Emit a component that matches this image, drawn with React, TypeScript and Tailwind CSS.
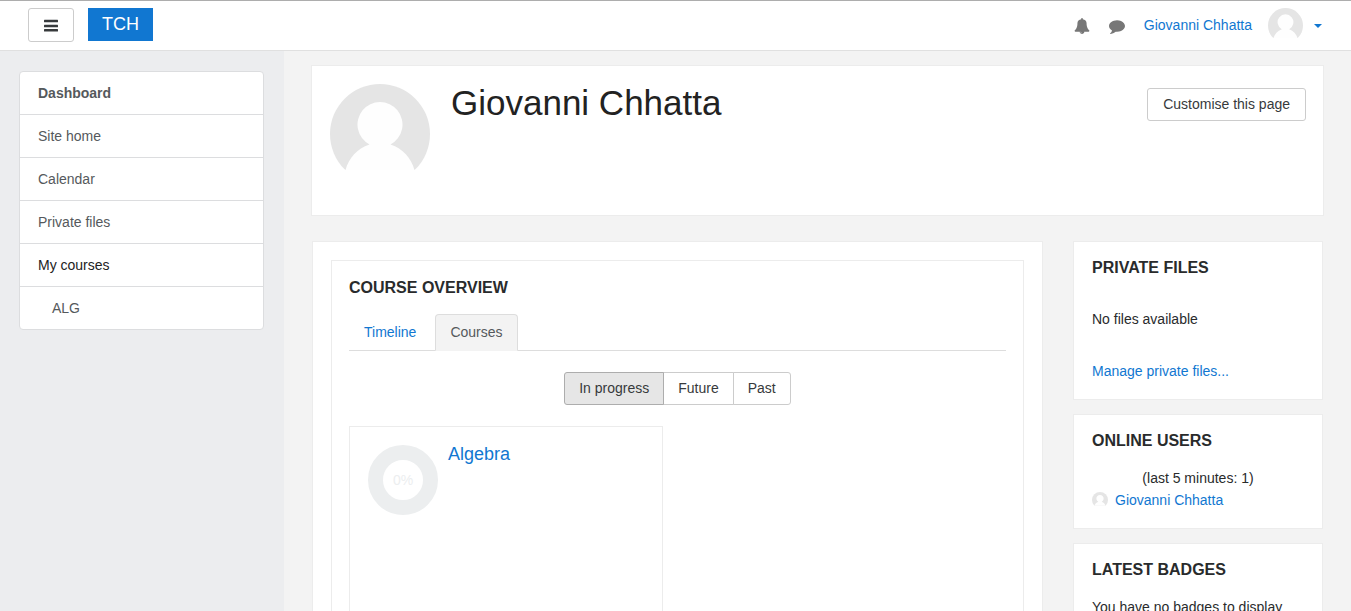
import React from "react";

const navItems = [
  { label: "Dashboard", style: "pl-[18px] font-bold text-[#55595c]" },
  { label: "Site home", style: "pl-[18px] text-[#55595c]" },
  { label: "Calendar", style: "pl-[18px] text-[#55595c]" },
  { label: "Private files", style: "pl-[18px] text-[#55595c]" },
  { label: "My courses", style: "pl-[18px] text-[#222222]" },
  { label: "ALG", style: "pl-8 text-[#55595c]" },
];

function Avatar({ className, id }: { className: string; id: string }) {
  return (
    <svg viewBox="0 0 100 100" className={className} aria-hidden="true">
      <defs>
        <clipPath id={id}>
          <rect width="100" height="86" />
        </clipPath>
      </defs>
      <g clipPath={`url(#${id})`}>
        <circle cx="50" cy="50" r="50" fill="#e5e5e5" />
        <path
          d="M15.500 86C19 74 27 64.500 39.500 60.500A22.500 22.500 0 1 1 60.500 60.500C73 64.500 81 74 84.500 86V90H15.500Z"
          fill="#fefefe"
        />
      </g>
    </svg>
  );
}

function BarsIcon() {
  return (
    <svg viewBox="0 0 14 13" className="h-[13px] w-[14px]" fill="currentColor" aria-hidden="true">
      <rect y="0.700" width="14" height="2.600" rx="0.500" />
      <rect y="5.700" width="14" height="2.600" rx="0.500" />
      <rect y="10" width="14" height="2.600" rx="0.500" />
    </svg>
  );
}

function BellIcon() {
  return (
    <svg viewBox="0 0 1792 1792" className="size-4" fill="currentColor" aria-hidden="true">
      <path d="M912 1696q0-16-16-16-59 0-101.500-42.500t-42.500-101.500q0-16-16-16t-16 16q0 73 51.500 124.500t124.500 51.500q16 0 16-16zm816-288q0 52-38 90t-90 38h-448q0 106-75 181t-181 75-181-75-75-181h-448q-52 0-90-38t-38-90q50-42 91-88t85-119.500 74.500-158.500 50-206 19.500-260q0-152 117-282.500t307-158.500q-8-19-8-39 0-40 28-68t68-28 68 28 28 68q0 20-8 39 190 28 307 158.500t117 282.500q0 139 19.500 260t50 206 74.500 158.500 85 119.500 91 88z" />
    </svg>
  );
}

function CommentIcon() {
  return (
    <svg viewBox="0 0 1792 1792" className="size-4" fill="currentColor" aria-hidden="true">
      <path d="M1792 896q0 174-120 321.500t-326 233-450 85.500q-70 0-145-8-198 175-460 242-49 14-114 22-17 2-30.500-9t-17.500-29v-1q-3-4-.5-12t2-10 4.500-9.500l6-9 7-8.500 8-9q7-8 31-34.500t34.500-38 31-39.500 32.500-51 27-59 26-76q-157-89-247.500-220t-90.500-281q0-130 71-248.500t191-204.500 286-136.500 348-50.500q244 0 450 85.500t326 233 120 321.500z" />
    </svg>
  );
}

function CaretIcon() {
  return (
    <svg viewBox="0 0 8 4" className="h-1 w-2" fill="currentColor" aria-hidden="true">
      <path d="M0 0H8L4 4Z" />
    </svg>
  );
}

function Block({ title, children }: { title: string; children: React.ReactNode }) {
  return (
    <section className="border border-[#ececec] bg-white px-[18px] pt-4 pb-[17px]">
      <h2 className="text-base leading-5 font-bold text-[#292b2c] uppercase">{title}</h2>
      {children}
    </section>
  );
}

export default function App() {
  return (
    <div className="flex min-h-screen flex-col bg-[#f3f3f3] font-['Liberation_Sans',Arial,sans-serif] text-sm leading-[21px] text-[#292b2c]">
      <header className="flex h-[51px] items-start justify-between border-t border-b border-t-[#adadad] border-b-[#e0e0e0] bg-white pt-[7px] pr-[29px] pl-7">
        <div className="flex items-start gap-[14px]">
          <button
            type="button"
            aria-label="Side panel"
            className="flex h-[34px] w-[46px] items-center justify-center rounded-[3px] border border-[#cccccc] bg-white text-[#373a3c]"
          >
            <BarsIcon />
          </button>
          <a href="#" className="bg-[#1177d1] px-[14px] text-lg leading-[33px] text-white">
            TCH
          </a>
        </div>
        <div className="flex items-center gap-[19px]">
          <button type="button" aria-label="Notifications" className="text-[#777777]">
            <BellIcon />
          </button>
          <button type="button" aria-label="Messages" className="text-[#777777]">
            <CommentIcon />
          </button>
          <a href="#" className="flex items-center text-[#1177d1]">
            Giovanni Chhatta
            <Avatar id="avatar-header" className="mr-[11px] ml-4 size-[35px]" />
            <CaretIcon />
          </a>
        </div>
      </header>

      <div className="flex grow">
        <aside className="w-[284px] shrink-0 bg-[#ecedef] py-5 pr-5 pl-[19px]">
          <nav className="divide-y divide-[#dcdddf] overflow-hidden rounded border border-[#dcdddf] bg-white">
            {navItems.map((item) => (
              <a key={item.label} href="#" className={`block h-[43px] pt-[11px] last:h-[42px] ${item.style}`}>
                {item.label}
              </a>
            ))}
          </nav>
        </aside>

        <main className="min-w-0 grow px-[27px] pt-[14px] pb-6">
          <div className="flex min-h-[151px] items-start border border-[#ececec] bg-white py-[18px] pr-[17px] pl-[18px]">
            <Avatar id="avatar-profile" className="size-[100px] shrink-0" />
            <h1 className="ml-[21px] grow text-[35px] leading-[38px] text-[#222222]">Giovanni Chhatta</h1>
            <button
              type="button"
              className="mt-1 h-[33px] rounded-[3px] border border-[#cccccc] bg-white px-[15px] text-[#373a3c]"
            >
              Customise this page
            </button>
          </div>

          <div className="mx-px mt-[25px] flex items-start gap-[30px]">
            <div className="min-w-0 grow border border-[#ececec] bg-white p-[18px]">
              <section className="border border-[#ececec] px-[17px] pt-[17px] pb-[18px]">
                <h2 className="text-base leading-5 font-bold text-[#292b2c] uppercase">Course overview</h2>
                <div role="tablist" className="mt-4 flex gap-1 border-b border-[#dddddd]">
                  <button
                    type="button"
                    role="tab"
                    aria-selected="false"
                    className="-mb-px h-[37px] rounded-t border border-transparent px-[14px] text-[#1177d1]"
                  >
                    Timeline
                  </button>
                  <button
                    type="button"
                    role="tab"
                    aria-selected="true"
                    className="-mb-px h-[37px] rounded-t border border-[#dddddd] border-b-[#f3f3f3] bg-[#f3f3f3] px-[14px] text-[#55595c]"
                  >
                    Courses
                  </button>
                </div>
                <div className="mt-[21px] flex justify-center text-[#373a3c]">
                  <button type="button" className="z-10 h-[33px] rounded-l-[3px] border border-[#adadad] bg-[#e6e6e6] px-[14px]">
                    In progress
                  </button>
                  <button type="button" className="-ml-px h-[33px] border border-[#cccccc] bg-white px-[14px]">
                    Future
                  </button>
                  <button type="button" className="-ml-px h-[33px] rounded-r-[3px] border border-[#cccccc] bg-white px-[14px]">
                    Past
                  </button>
                </div>
                <div className="mt-[21px] grid grid-cols-2 gap-[30px]">
                  <article className="flex min-h-[232px] items-start gap-[10px] border border-[#ececec] bg-white p-[18px]">
                    <div className="flex size-[70px] shrink-0 items-center justify-center rounded-full border-[15px] border-[#eceeef] text-[#eceeef]">
                      0%
                    </div>
                    <h3 className="text-lg leading-[18px]">
                      <a href="#" className="text-[#1177d1]">
                        Algebra
                      </a>
                    </h3>
                  </article>
                </div>
              </section>
            </div>

            <aside className="flex w-[250px] shrink-0 flex-col gap-[14px]">
              <Block title="Private files">
                <p className="mt-[31px]">No files available</p>
                <a href="#" className="mt-[31px] block text-[#1177d1]">
                  Manage private files...
                </a>
              </Block>
              <Block title="Online users">
                <p className="mt-[17px] text-center">(last 5 minutes: 1)</p>
                <a href="#" className="flex h-[22px] items-center gap-[7px] text-[#1177d1]">
                  <Avatar id="avatar-online" className="size-4" />
                  Giovanni Chhatta
                </a>
              </Block>
              <Block title="Latest badges">
                <p className="mt-[17px]">You have no badges to display</p>
              </Block>
            </aside>
          </div>
        </main>
      </div>
    </div>
  );
}
